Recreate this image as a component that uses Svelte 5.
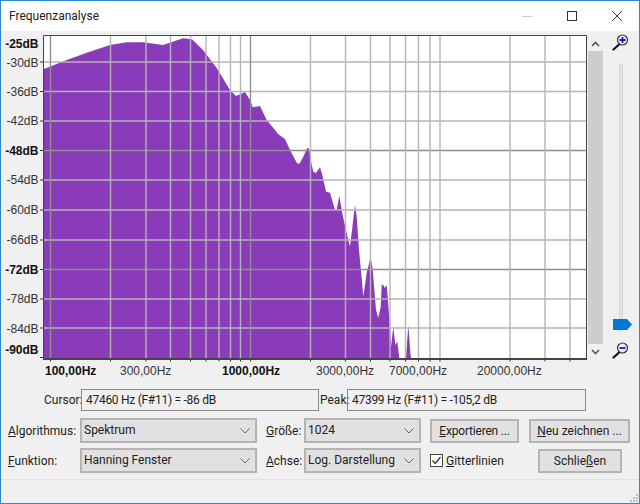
<script>
    // Plot area in page coordinates
    const plot = { left: 44, top: 36, right: 586, bottom: 358 };

    const hLines = [
        { y: 62 }, { y: 91.5 }, { y: 121 }, { y: 150.5, major: true }, { y: 180 },
        { y: 210 }, { y: 240 }, { y: 269.5, major: true }, { y: 299 }, { y: 328 }
    ];
    const vLines = [
        { x: 50.5, major: true }, { x: 110.5 }, { x: 146 }, { x: 170.5 }, { x: 190.5 }, { x: 206 },
        { x: 219 }, { x: 230.5 }, { x: 240.5 }, { x: 250.5, major: true }, { x: 310.5 }, { x: 345.5 },
        { x: 370.5 }, { x: 390 }, { x: 405.5 }, { x: 418.5 }, { x: 430 }, { x: 440 },
        { x: 510 }, { x: 545 }, { x: 570 }
    ];

    const yLabels = [
        { text: '-25dB', y: 48, bold: true },
        { text: '-30dB', y: 66.5, tick: 62 },
        { text: '-36dB', y: 96, tick: 91.5 },
        { text: '-42dB', y: 125, tick: 121 },
        { text: '-48dB', y: 154.5, tick: 150.5, bold: true },
        { text: '-54dB', y: 184, tick: 180 },
        { text: '-60dB', y: 214, tick: 210 },
        { text: '-66dB', y: 244, tick: 240 },
        { text: '-72dB', y: 273.5, tick: 269.5, bold: true },
        { text: '-78dB', y: 303, tick: 299 },
        { text: '-84dB', y: 333, tick: 328 },
        { text: '-90dB', y: 354, tick: 357.5, bold: true }
    ];
    const xLabels = [
        { text: '100,00Hz', x: 45, bold: true },
        { text: '300,00Hz', x: 120 },
        { text: '1000,00Hz', x: 222, bold: true },
        { text: '3000,00Hz', x: 316 },
        { text: '7000,00Hz', x: 389 },
        { text: '20000,00Hz', x: 477 }
    ];

    // Outline of the spectrum, read off left to right
    const curve = [
        [44, 69], [66.7, 60], [86.7, 52.7], [110, 45], [126.7, 42.3], [143, 42.3], [163, 45],
        [183, 38.3], [192, 39.3], [203, 50], [216.7, 68], [230, 90], [236, 96], [245, 92],
        [250, 100], [252.7, 107.3], [260, 106], [266.7, 120], [275, 130], [278, 134], [285, 139],
        [290, 150], [296.7, 162.7], [299.3, 164], [303.3, 156.7], [307, 148.3], [309, 148.3],
        [310.7, 160], [313.3, 171.7], [316, 173], [320, 167.3], [322.3, 175], [326, 191.7],
        [330, 192.7], [335, 210], [336.7, 210], [339.3, 196], [341.7, 210], [343.3, 218],
        [346.7, 233.3], [350, 246.7], [355, 205], [356.7, 216.7], [359, 250], [361.7, 278],
        [363.3, 296.7], [366.7, 273], [370.7, 257], [372.7, 270], [376, 310], [378.3, 317.7],
        [380.7, 306.7], [381.7, 285], [383.3, 285], [384.7, 288], [386.7, 285], [388.3, 305],
        [390, 328], [391, 346.7], [393.3, 326.7], [395.3, 345], [397.3, 341.7], [399.3, 358],
        [406, 358], [408.3, 325], [410.7, 356.7], [411.5, 358]
    ];
    const spectrum = [...curve, [44, 358]].map((p) => p.join(',')).join(' ');
</script>

<div class="window">
    <header class="titlebar">
        <span class="title">Frequenzanalyse</span>
        <div class="caption-buttons">
            <span class="caption"><svg width="10" height="10"><path d="M0 5.5H10" stroke="#cfcfcf" /></svg></span>
            <span class="caption"><svg width="10" height="10"><rect x="0.5" y="0.5" width="9" height="9" fill="none" stroke="#333" /></svg></span>
            <span class="caption"><svg width="10" height="10"><path d="M0 0L10 10M10 0L0 10" stroke="#333" /></svg></span>
        </div>
    </header>

    <main class="body">
        <div class="graph-row">
            <svg class="chart" width="587" height="349" viewBox="1 31 587 349">
                <rect x={plot.left} y={plot.top} width={plot.right - plot.left} height={plot.bottom - plot.top} fill="#fff" />
                <polygon points={spectrum} fill="#8a3bba" />
                {#each hLines as l}
                    <line x1={plot.left} x2={plot.right} y1={l.y} y2={l.y} stroke={l.major ? '#8e8e8e' : '#b4b4b4'} stroke-width="1.4" />
                {/each}
                {#each vLines as l}
                    <line x1={l.x} x2={l.x} y1={plot.top} y2={plot.bottom} stroke={l.major ? '#8e8e8e' : '#b4b4b4'} stroke-width="1.4" />
                    <line x1={l.x} x2={l.x} y1={plot.bottom} y2={plot.bottom + 3.5} stroke="#333" />
                {/each}
                <path d="M43.5 359V35.5H586.5V359Z" fill="none" stroke="#444" />
                <path d="M43 359H587" stroke="#444" stroke-width="2" />
                {#each yLabels as l}
                    <text class="axis" class:bold={l.bold} x="38.5" y={l.y} text-anchor="end">{l.text}</text>
                    {#if l.tick}
                        <line x1="40" x2="43" y1={l.tick} y2={l.tick} stroke="#333" />
                    {/if}
                {/each}
                {#each xLabels as l}
                    <text class="axis" class:bold={l.bold} x={l.x} y="375">{l.text}</text>
                {/each}
            </svg>

            <div class="scrollbar">
                <span class="arrow"><svg width="9" height="6"><path d="M1 5L4.5 1.5L8 5" fill="none" stroke="#555" stroke-width="1.6" /></svg></span>
                <div class="thumb"></div>
                <span class="arrow"><svg width="9" height="6"><path d="M1 1L4.5 4.5L8 1" fill="none" stroke="#555" stroke-width="1.6" /></svg></span>
            </div>

            <div class="slider">
                <svg class="zoom-icon" width="18" height="18" viewBox="0 0 18 18">
                    <path d="M7 11.5L1.5 16.5" stroke="#111" stroke-width="2.2" stroke-linecap="round" />
                    <circle cx="10.5" cy="7" r="5" fill="#eef" stroke="#333" stroke-width="1.2" />
                    <path d="M7.5 7H13.5M10.5 4V10" stroke="#1a1ac0" stroke-width="1.8" />
                </svg>
                <div class="track">
                    <svg class="handle" width="19" height="11"><path d="M0 0H14L19 5.5L14 11H0Z" fill="#0078d7" /></svg>
                </div>
                <svg class="zoom-icon" width="18" height="18" viewBox="0 0 18 18">
                    <path d="M7 11.5L1.5 16.5" stroke="#111" stroke-width="2.2" stroke-linecap="round" />
                    <circle cx="10.5" cy="7" r="5" fill="#eef" stroke="#333" stroke-width="1.2" />
                    <path d="M7.5 7H13.5" stroke="#1a1ac0" stroke-width="1.8" />
                </svg>
            </div>
        </div>

        <div class="readouts">
            <span class="readout-label cursor">Cursor:</span>
            <div class="readout">47460 Hz (F#11) = -86 dB</div>
            <span class="readout-label peak">Peak:</span>
            <div class="readout wide">47399 Hz (F#11) = -105,2 dB</div>
        </div>

        <div class="controls">
            <span class="label"><u>A</u>lgorithmus:</span>
            <div class="select">Spektrum<svg width="10" height="6"><path d="M0.5 0.5L5 5L9.5 0.5" fill="none" stroke="#666" /></svg></div>
            <span class="label second"><u>G</u>röße:</span>
            <div class="select">1024<svg width="10" height="6"><path d="M0.5 0.5L5 5L9.5 0.5" fill="none" stroke="#666" /></svg></div>
            <div class="actions">
                <button class="export"><u>E</u>xportieren ...</button>
                <button class="redraw"><u>N</u>eu zeichnen ...</button>
            </div>

            <span class="label"><u>F</u>unktion:</span>
            <div class="select">Hanning Fenster<svg width="10" height="6"><path d="M0.5 0.5L5 5L9.5 0.5" fill="none" stroke="#666" /></svg></div>
            <span class="label second"><u>A</u>chse:</span>
            <div class="select">Log. Darstellung<svg width="10" height="6"><path d="M0.5 0.5L5 5L9.5 0.5" fill="none" stroke="#666" /></svg></div>
            <div class="actions">
                <span class="checkbox"><svg width="13" height="13"><rect x="0.5" y="0.5" width="12" height="12" fill="#fff" stroke="#444" /><path d="M2.5 6.5L5.2 9.5L10.5 3" fill="none" stroke="#333" stroke-width="1.2" /></svg></span>
                <span class="check-label"><u>G</u>itterlinien</span>
                <button class="close">Schlie<u>ß</u>en</button>
            </div>
        </div>
    </main>

    <footer class="statusbar">
        <svg class="grip" width="10" height="10">
            <path d="M7 1h2v2H7zM4 4h2v2H4zM7 4h2v2H7zM1 7h2v2H1zM4 7h2v2H4zM7 7h2v2H7z" fill="#bdbdbd" />
        </svg>
    </footer>
</div>

<style>
    :global(body) {
        margin: 0;
    }

    .window {
        width: 640px;
        height: 504px;
        box-sizing: border-box;
        border: 1px solid #2b88d8;
        display: flex;
        flex-direction: column;
        background: #f0f0f0;
        font-family: Roboto, sans-serif;
        font-size: 12px;
        color: #222;
        overflow: hidden;
    }

    .titlebar {
        height: 30px;
        flex: none;
        background: #fff;
        display: flex;
        align-items: center;
        justify-content: space-between;
        padding-left: 8px;
    }

    .title {
        font-size: 12px;
    }

    .caption-buttons {
        display: flex;
    }

    .caption {
        width: 45px;
        height: 30px;
        display: flex;
        align-items: center;
        justify-content: center;
    }

    .graph-row {
        display: flex;
        height: 349px;
        flex: none;
    }

    .chart {
        display: block;
        flex: none;
    }

    .axis {
        font-family: "Liberation Sans", sans-serif;
        font-size: 12px;
        fill: #333;
    }

    .axis.bold {
        font-weight: bold;
        fill: #111;
    }

    .scrollbar {
        width: 15px;
        margin: 5px 0 21px;
        display: flex;
        flex-direction: column;
    }

    .arrow {
        height: 15px;
        display: flex;
        align-items: center;
        justify-content: center;
        flex: none;
    }

    .thumb {
        flex: 1;
        background: #cdcdcd;
    }

    .slider {
        flex: 1;
        display: flex;
        flex-direction: column;
        align-items: center;
        padding: 2px 0 21px;
    }

    .zoom-icon {
        flex: none;
    }

    .track {
        position: relative;
        flex: 1;
        width: 4px;
        margin: 13px 0 10px;
        background: #e4e4e4;
        border: 1px solid #d6d6d6;
        box-sizing: border-box;
    }

    .handle {
        position: absolute;
        left: -7px;
        bottom: 0;
    }

    .readouts {
        display: flex;
        align-items: center;
        margin-top: 9px;
        height: 22px;
        padding-left: 43px;
    }

    .readout-label.peak {
        width: 27px;
        margin-left: 1px;
    }

    .readout-label.cursor {
        width: 37px;
    }

    .readout {
        width: 238px;
        height: 22px;
        box-sizing: border-box;
        border: 1px solid #8a8a8a;
        padding-left: 4px;
        line-height: 20px;
        letter-spacing: -0.28px;
    }

    .readout.wide {
        width: 239px;
    }

    .controls {
        display: grid;
        grid-template-columns: 79px 177px 47px 117px 1fr;
        grid-auto-rows: 25px;
        row-gap: 5px;
        margin-top: 7px;
    }

    .label {
        padding-left: 7px;
        line-height: 27px;
    }

    .label.second {
        padding-left: 9px;
    }

    .select {
        display: flex;
        align-items: center;
        justify-content: space-between;
        box-sizing: border-box;
        background: #e1e1e1;
        border: 2px solid #b4b4b4;
        padding: 0 5px 2px 2px;
    }

    .select svg {
        margin-top: 3px;
    }

    .actions {
        display: flex;
        align-items: center;
        padding-left: 9px;
    }

    button {
        height: 24px;
        box-sizing: border-box;
        background: #e1e1e1;
        border: 2px solid #b4b4b4;
        padding: 0;
        font: inherit;
        color: inherit;
    }

    .export {
        width: 89px;
        letter-spacing: -0.2px;
    }

    .redraw {
        width: 101px;
        margin-left: 10px;
    }

    .checkbox {
        display: flex;
        width: 16px;
        flex: none;
    }

    .check-label {
        width: 92px;
        flex: none;
    }

    .close {
        width: 84px;
    }

    .statusbar {
        flex: 1;
        margin-top: 6px;
        border-top: 1px solid #e2e2e2;
        position: relative;
    }

    .grip {
        position: absolute;
        right: 0;
        bottom: 0;
    }
</style>
